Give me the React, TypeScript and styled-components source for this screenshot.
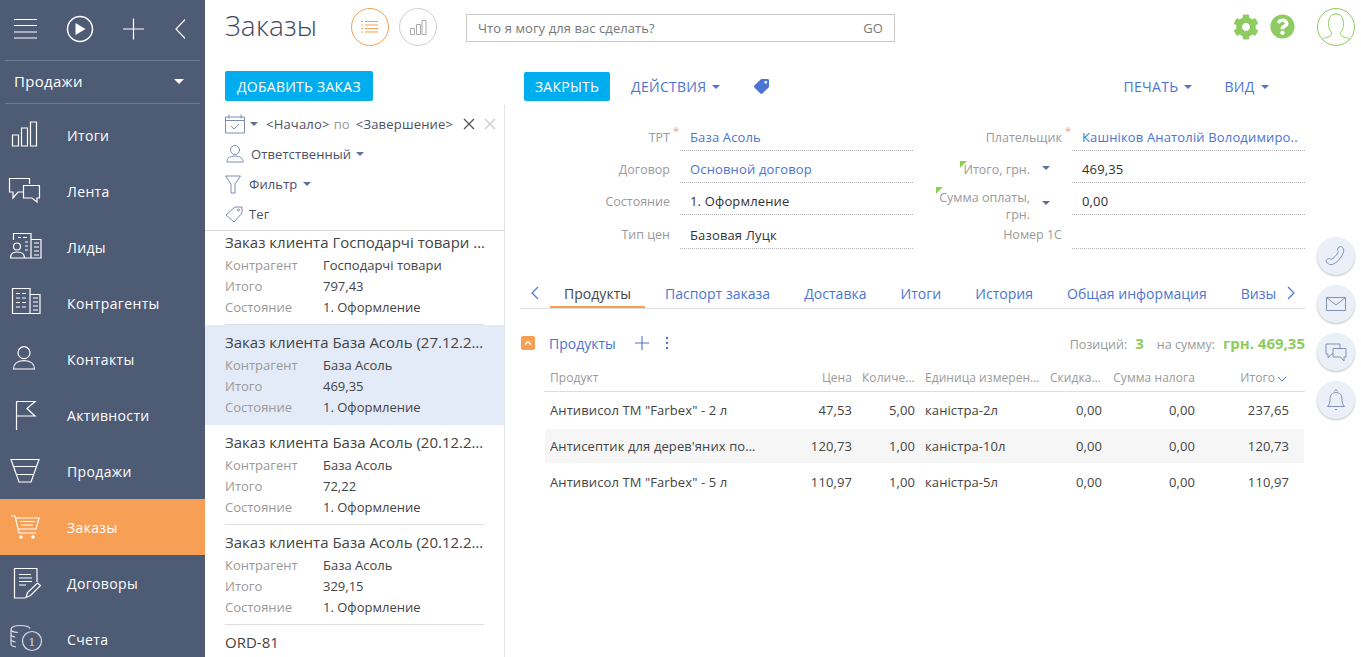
import React from 'react';
import styled, { createGlobalStyle } from 'styled-components';
import { FaCog, FaQuestionCircle, FaTag } from 'react-icons/fa';

const BLUE = '#4d74d2';
const SKY = '#00aeef';
const ORANGE = '#f79f55';
const GREEN = '#8ecb60';
const NAVY = '#4e5b75';
const LABEL = '#9a9a9a';

const GlobalStyle = createGlobalStyle`
  html, body, #root {
    margin: 0;
    height: 100%;
    overflow: hidden;
  }
  body {
    font-family: "Open Sans", "Liberation Sans", sans-serif;
    font-size: 13px;
    color: #444;
    background: #fff;
  }
  * { box-sizing: border-box; }
`;

const Page = styled.div`
  display: flex;
  height: 657px;
  overflow: hidden;
`;

const Sidebar = styled.aside`
  width: 205px;
  flex: none;
  background: ${NAVY};
  color: #fff;
  overflow: hidden;
`;

const SideTop = styled.div`
  height: 61px;
  margin: 0 5px;
  border-bottom: 1px solid #6f7b94;
  padding: 0 0 0 8px;
  display: flex;
  align-items: center;
`;

const SideSvg = styled.svg`
  display: block;
  fill: none;
  stroke: #fff;
  stroke-width: 1.2;
`;

const Section = styled.div`
  height: 43px;
  margin: 0 5px;
  padding: 0 16px 2px 9px;
  border-bottom: 1px solid #6f7b94;
  display: flex;
  align-items: center;
  justify-content: space-between;
  font-size: 15px;
  letter-spacing: 0.3px;
`;

const Caret = styled.span<{ $color?: string; $size?: number }>`
  display: inline-block;
  flex: none;
  width: 0;
  height: 0;
  border-style: solid;
  border-color: ${(p) => p.$color ?? '#5a6f9c'} transparent transparent;
  border-width: ${(p) => p.$size ?? 4}px ${(p) => p.$size ?? 4}px 0;
`;

const Nav = styled.nav`
  padding-top: 3px;
`;

const NavItem = styled.div<{ $active?: boolean }>`
  height: 56px;
  padding-left: 4px;
  display: flex;
  align-items: center;
  font-size: 14px;
  font-weight: 500;
  letter-spacing: 0.35px;
  background: ${(p) => (p.$active ? ORANGE : 'transparent')};
  svg { margin-right: 13px; flex: none; }
`;

const NavIcon = ({ children }: { children: React.ReactNode }) => (
  <SideSvg width="50" height="40" viewBox="0 0 50 40">{children}</SideSvg>
);

const navItems: { label: string; active?: boolean; icon: React.ReactNode }[] = [
  { label: 'Итоги', icon: <path d="M8.5 20h6v11h-6zM17.5 13h6v18h-6zM26.5 7h6v24h-6z" /> },
  { label: 'Лента', icon: <path d="M25.5 13V7.5H5.5V21H9v6l5-6h5M19.5 14.5h16V27H33v4l-5-4h-8.5z" /> },
  {
    label: 'Лиды',
    icon: (
      <>
        <path d="M9.5 13V6.5h17.5v24.5H21M27 12.5h10V31H27M14 10.5h3M19 10.5h4M21 15h3M21 19h3M21 23h3M30 16h5M30 20h5M30 24h5M30 28h5" />
        <circle cx="13" cy="19.5" r="3.5" />
        <path d="M6.5 31c0-4 2-6 6.500-6s7.500 2 7.500 6z" />
      </>
    ),
  },
  {
    label: 'Контрагенты',
    icon: <path d="M8.500 5.500h17.500v25H8.500zM26 11.500h10v19H26M12 10.500h4M18 10.500h4M12 15h4M18 15h4M12 19.500h4M18 19.500h4M12 24h4M18 24h4M29 15h5M29 19h5M29 23h5M29 27h5" />,
  },
  {
    label: 'Контакты',
    icon: (
      <>
        <circle cx="20" cy="13.700" r="6" />
        <path d="M9.500 30c0-6 3.500-8 10.500-8.500 7 .5 10.500 2.500 10.500 8.500z" />
      </>
    ),
  },
  { label: 'Активности', icon: <path d="M12.500 35V6.500H31L23 13.500 31 21H12.500" /> },
  { label: 'Продажи', icon: <path d="M7 8.500h28L27 31H15zM10 15.500h22M13 23.500h16" /> },
  {
    label: 'Заказы',
    active: true,
    icon: (
      <>
        <path d="M7 9h4l4 17h17M12 11h23l-3 11H14.500M16 14.500h15M17 18h12" />
        <circle cx="17" cy="30" r="1.200" fill="#fff" />
        <circle cx="29" cy="30" r="1.200" fill="#fff" />
      </>
    ),
  },
  {
    label: 'Договоры',
    icon: (
      <>
        <path d="M33 19V5.500H10.500V35H21M15 11.500h12M15 15h13M15 18.500h13M15 22h7" />
        <path d="M22 34.500l1.500-5L33.500 20l3 2.500-10 10z" />
      </>
    ),
  },
  {
    label: 'Счета',
    icon: (
      <g stroke="#d8dce4">
        <path d="M7 10c0-2 4-3.500 9-3.500s9 1 10 3M7 10c0 2 3 3.300 7 3.500M7 10v5c0 1.500 1.500 2.500 4 3.200M7 15v5c0 1.500 1.500 2.500 4.500 3.200M7 20v5c0 1.500 2 2.500 5 3" />
        <circle cx="28" cy="22" r="9.500" />
        <text x="28" y="27" fontSize="13" textAnchor="middle" fontFamily="Liberation Serif, serif" fill="#d8dce4" stroke="none">1</text>
      </g>
    ),
  },
];

const Main = styled.main`
  flex: 1;
  min-width: 0;
  display: flex;
  flex-direction: column;
`;

const Header = styled.header`
  height: 53px;
  flex: none;
  padding: 0 6px 0 20px;
  display: flex;
  align-items: center;
`;

const Title = styled.h1`
  margin: -3px 34px 0 0;
  width: 92px;
  font-size: 28px;
  font-weight: 300;
  color: #3f4860;
  letter-spacing: 0.2px;
`;

const RoundIcon = styled.div<{ $color: string }>`
  width: 38px;
  height: 38px;
  margin-right: 10px;
  border: 1px solid ${(p) => p.$color};
  border-radius: 50%;
  display: flex;
  align-items: center;
  justify-content: center;
  flex: none;
`;

const Search = styled.div`
  width: 429px;
  height: 28px;
  margin: 2px 0 0 19px;
  padding: 0 11px;
  border: 1px solid #c9c9c9;
  display: flex;
  align-items: center;
  justify-content: space-between;
  color: #777;
  letter-spacing: 0.08px;
`;

const HeaderRight = styled.div`
  margin-left: auto;
  display: flex;
  align-items: center;
  color: ${GREEN};
`;

const Avatar = styled.div`
  width: 38px;
  height: 38px;
  margin-left: 22px;
  border: 1px solid ${GREEN};
  border-radius: 50%;
  overflow: hidden;
`;

const Columns = styled.div`
  flex: 1;
  min-height: 0;
  display: flex;
`;

const ListColumn = styled.div`
  width: 300px;
  flex: none;
  display: flex;
  flex-direction: column;
`;

const PrimaryButton = styled.button`
  height: 30px;
  border: 0;
  border-radius: 2px;
  background: ${SKY};
  color: #fff;
  font: 14px "Open Sans", sans-serif;
  letter-spacing: 0.25px;
  padding: 0 12px;
`;

const AddRow = styled.div`
  height: 52px;
  padding: 18px 0 0 20px;
  flex: none;
`;

const Filters = styled.div`
  flex: none;
  height: 126px;
  padding: 4px 0 0 20px;
  border-right: 1px solid #e4e4e4;
  border-bottom: 1px solid #d9d9d9;
`;

const FilterRow = styled.div`
  height: 30px;
  display: flex;
  align-items: center;
  color: #4a5068;
  white-space: nowrap;
  letter-spacing: 0.1px;
`;

const FilterIcon = styled.svg<{ $gap: number }>`
  flex: none;
  width: 20px;
  height: 20px;
  margin-right: ${(p) => p.$gap}px;
  fill: none;
  stroke: #7d8db0;
  stroke-width: 1;
`;

const DateText = styled.span<{ $left?: number }>`
  margin-left: ${(p) => p.$left ?? 0}px;
  letter-spacing: 0.2px;
`;

const Muted = styled.span`
  color: #999;
  margin: 0 6px 0 4px;
`;

const ClearIcon = styled.svg<{ $color: string; $left: number }>`
  flex: none;
  width: 12px;
  height: 12px;
  margin-left: ${(p) => p.$left}px;
  stroke: ${(p) => p.$color};
  stroke-width: 1.3;
  fill: none;
`;

const OrderList = styled.div`
  flex: 1;
  min-height: 0;
  overflow: hidden;
  border-right: 1px solid #e4e4e4;
`;

const OrderItem = styled.div<{ $selected?: boolean }>`
  height: 100px;
  padding: 0 20px;
  background: ${(p) => (p.$selected ? '#e3eaf8' : 'transparent')};
  &:first-child { margin-top: -6px; }
`;

const OrderBody = styled.div<{ $plain?: boolean }>`
  height: 100px;
  padding-top: 6px;
  border-bottom: 1px solid ${(p) => (p.$plain ? 'transparent' : '#dedede')};
`;

const OrderTitle = styled.div`
  height: 21px;
  margin: 0 -2px 3px 0;
  line-height: 22px;
  font-size: 15px;
  color: #444;
  white-space: nowrap;
  overflow: hidden;
  text-overflow: ellipsis;
`;

const MetaRow = styled.div`
  height: 21px;
  line-height: 21px;
  display: grid;
  grid-template-columns: 98px 1fr;
  font-size: 13px;
`;

const MetaLabel = styled.span`
  color: ${LABEL};
`;

const Detail = styled.section`
  width: 800px;
  flex: none;
`;

const Toolbar = styled.div`
  height: 66px;
  padding: 19px 0 0 19px;
  display: flex;
  align-items: flex-start;
`;

const ToolLink = styled.div<{ $left: number }>`
  height: 29px;
  margin-left: ${(p) => p.$left}px;
  display: flex;
  align-items: center;
  gap: 6px;
  color: ${BLUE};
  font-size: 14px;
  letter-spacing: 0.3px;
`;

const CloseButton = styled(PrimaryButton)`
  height: 29px;
  width: 86px;
  padding: 0;
`;

const Form = styled.div`
  display: grid;
  grid-template-columns: 408px 372px;
  column-gap: 20px;
`;

const FormColumn = styled.div`
  display: flex;
  flex-direction: column;
`;

const Field = styled.div<{ $tall?: boolean }>`
  height: ${(p) => (p.$tall ? 34 : 32)}px;
  display: grid;
  grid-template-columns: 1fr 233px;
  grid-template-rows: minmax(0, 1fr);
  column-gap: 10px;
`;

const FieldLabel = styled.div<{ $pad?: number; $tall?: boolean }>`
  padding: ${(p) => (p.$tall ? 10 : 9)}px ${(p) => p.$pad ?? 0}px 0 0;
  line-height: 20px;
  font-size: 12.5px;
  text-align: right;
  color: ${LABEL};
  position: relative;
`;

const Star = styled.span`
  position: absolute;
  right: -9px;
  top: 2px;
  color: #ee9a70;
  font-size: 11px;
`;

const LabelCaret = styled.span<{ $top: number }>`
  position: absolute;
  right: 12px;
  top: ${(p) => p.$top}px;
  display: flex;
`;

const Corner = styled.span<{ $left: number; $top: number }>`
  position: absolute;
  left: ${(p) => p.$left}px;
  top: ${(p) => p.$top}px;
  width: 0;
  height: 0;
  border-style: solid;
  border-width: 7px 7px 0 0;
  border-color: #8fd14f transparent transparent;
`;

const TwoLine = styled.div`
  line-height: 17px;
  margin-top: -3px;
`;

const FieldValue = styled.div<{ $link?: boolean; $tall?: boolean }>`
  padding: ${(p) => (p.$tall ? 10 : 8)}px 0 0 10px;
  line-height: 20px;
  border-bottom: 1px dotted #b5b5b5;
  color: ${(p) => (p.$link ? BLUE : '#333')};
  letter-spacing: 0.15px;
  white-space: nowrap;
  overflow: hidden;
`;

const TabBar = styled.div`
  margin: 29px 0 0 15px;
  height: 31px;
  border-bottom: 1px solid #ddd;
  display: flex;
`;

const TabArrow = styled.div<{ $width: number }>`
  width: ${(p) => p.$width}px;
  flex: none;
  display: flex;
  align-items: center;
  justify-content: center;
  height: 30px;
`;

const TabStrip = styled.div`
  flex: 1;
  min-width: 0;
  display: flex;
  gap: 6px;
  overflow: hidden;
`;

const Tab = styled.div<{ $active?: boolean }>`
  height: 31px;
  padding: 0 14px;
  line-height: 31px;
  flex: none;
  font-size: 14px;
  letter-spacing: 0.03px;
  white-space: nowrap;
  color: ${(p) => (p.$active ? '#444' : BLUE)};
  border-bottom: 3px solid ${(p) => (p.$active ? ORANGE : 'transparent')};
`;

const ProductsHead = styled.div`
  height: 22px;
  margin: 23px 0 0 16px;
  display: flex;
  align-items: center;
`;

const Toggle = styled.div`
  width: 14px;
  height: 14px;
  margin-right: 14px;
  background: ${ORANGE};
  border-radius: 2px;
  display: flex;
  align-items: center;
  justify-content: center;
`;

const ProductsTitle = styled.span`
  color: ${BLUE};
  font-size: 14px;
  width: 86px;
`;

const Summary = styled.div`
  margin-left: auto;
  display: flex;
  align-items: baseline;
  color: ${LABEL};
  font-size: 12.5px;
  white-space: nowrap;
`;

const SummaryValue = styled.b<{ $size: number; $left: number; $right: number }>`
  color: ${GREEN};
  font-size: ${(p) => p.$size}px;
  margin: 0 ${(p) => p.$right}px 0 ${(p) => p.$left}px;
`;

const Table = styled.div`
  margin-left: 39px;
`;

const GRID = '210px 92px 63px 125px 62px 93px 94px';

const HeadRow = styled.div`
  height: 28px;
  margin-top: 10px;
  padding: 0 15px 0 6px;
  border-bottom: 1px solid #ddd;
  display: grid;
  grid-template-columns: ${GRID};
  align-items: center;
  color: ${LABEL};
  font-size: 12px;
  letter-spacing: 0.05px;
`;

const Row = styled.div<{ $striped?: boolean }>`
  height: 34px;
  margin: 2px 1px 0;
  ${HeadRow} + & { margin-top: 1px; }
  padding: 0 14px 0 5px;
  display: grid;
  grid-template-columns: ${GRID};
  align-items: center;
  letter-spacing: 0.1px;
  background: ${(p) => (p.$striped ? '#f6f6f6' : 'transparent')};
`;

const Cell = styled.div<{ $right?: boolean }>`
  min-width: 0;
  padding-left: 10px;
  white-space: nowrap;
  overflow: hidden;
  text-overflow: ellipsis;
  text-align: ${(p) => (p.$right ? 'right' : 'left')};
  &:first-child { padding: 0 2px 0 0; }
`;

const Widgets = styled.div`
  flex: none;
  padding: 184px 0 0 12px;
  display: flex;
  flex-direction: column;
  gap: 10px;
`;

const Widget = styled.div`
  width: 38px;
  height: 38px;
  border-radius: 50%;
  background: #ebeff7;
  box-shadow: 0 1px 2px rgba(0, 0, 0, 0.25);
  display: flex;
  align-items: center;
  justify-content: center;
  svg { fill: none; stroke: #7f93b5; stroke-width: 1; }
`;

const SortMark = styled.svg`
  margin: 0 2px 0 2px;
`;

const orders = [
  { title: 'Заказ клиента Господарчі товари (27.12.2017)', client: 'Господарчі товари', total: '797,43' },
  { title: 'Заказ клиента База Асоль (27.12.2017)', client: 'База Асоль', total: '469,35', selected: true },
  { title: 'Заказ клиента База Асоль (20.12.2017)', client: 'База Асоль', total: '72,22' },
  { title: 'Заказ клиента База Асоль (20.12.2017)', client: 'База Асоль', total: '329,15' },
];

const tabs = ['Продукты', 'Паспорт заказа', 'Доставка', 'Итоги', 'История', 'Общая информация', 'Визы'];

const products = [
  { name: 'Антивисол ТМ "Farbex" - 2 л', price: '47,53', qty: '5,00', unit: 'каністра-2л', total: '237,65' },
  { name: "Антисептик для дерев'яних поверхонь", price: '120,73', qty: '1,00', unit: 'каністра-10л', total: '120,73', striped: true },
  { name: 'Антивисол ТМ "Farbex" - 5 л', price: '110,97', qty: '1,00', unit: 'каністра-5л', total: '110,97' },
];

const Chevron = ({ left }: { left?: boolean }) => (
  <svg width="10" height="14" viewBox="0 0 10 14" fill="none" stroke={BLUE} strokeWidth="1.200">
    <path d={left ? 'M8 1L2 7l6 6' : 'M2 1l6 6-6 6'} />
  </svg>
);

export default function App() {
  return (
    <Page>
      <GlobalStyle />
      <Sidebar>
        <SideTop>
          <SideSvg width="172" height="30" viewBox="0 0 172 30">
            <path d="M1 4.500h23M1 10.500h23M1 17h23M1 23h23" />
            <circle cx="67" cy="14" r="12.500" strokeWidth="1.500" />
            <path d="M62.500 8l10 6-10 6z" fill="#fff" stroke="none" />
            <path d="M110 14h21M120.500 3.500v21" />
            <path d="M173 3.500L163 14l10 10.500" />
          </SideSvg>
        </SideTop>
        <Section>
          Продажи
          <Caret $color="#fff" $size={5} />
        </Section>
        <Nav>
          {navItems.map((item) => (
            <NavItem key={item.label} $active={item.active}>
              <NavIcon>{item.icon}</NavIcon>
              {item.label}
            </NavItem>
          ))}
        </Nav>
      </Sidebar>
      <Main>
        <Header>
          <Title>Заказы</Title>
          <RoundIcon $color={ORANGE}>
            <svg width="18" height="14" viewBox="0 0 18 14" stroke={ORANGE} fill="none">
              <path d="M0 1.500h2M4 1.500h13M0 5h2M4 5h13M0 8.500h2M4 8.500h13M0 12h2M4 12h13" />
            </svg>
          </RoundIcon>
          <RoundIcon $color="#cfcfcf">
            <svg width="18" height="18" viewBox="0 0 18 18" stroke="#aaa" fill="none">
              <path d="M1.500 10.500h4v6h-4zM7.500 6.500h4v10h-4zM13 2.500h4v14h-4z" />
            </svg>
          </RoundIcon>
          <Search>
            <span>Что я могу для вас сделать?</span>
            <span>GO</span>
          </Search>
          <HeaderRight>
            <FaCog size={26} />
            <FaQuestionCircle size={25} style={{ marginLeft: 11 }} />
            <Avatar>
              <svg width="36" height="36" viewBox="0 0 36 36" fill="none" stroke={GREEN}>
                <path d="M1 36c1-6 6-7 10-8.500 2-1 3-2 2.500-4-2-2.500-3-5-3-9C10.500 8 13.500 5 18 5s7.500 3 7.500 9.500c0 4-1 6.500-3 9-.5 2 .5 3 2.500 4 4 1.500 9 2.500 10 8.500" />
              </svg>
            </Avatar>
          </HeaderRight>
        </Header>
        <Columns>
          <ListColumn>
            <AddRow>
              <PrimaryButton>ДОБАВИТЬ ЗАКАЗ</PrimaryButton>
            </AddRow>
            <Filters>
              <FilterRow>
                <FilterIcon $gap={5} viewBox="0 0 20 20">
                  <path d="M.5 3h19v16H.5zM.5 6.500h19M4 .5v4M16 .5v4M6 12l3 3 5-5" />
                </FilterIcon>
                <Caret $color="#5f7196" />
                <DateText $left={8}>&lt;Начало&gt;</DateText>
                <Muted>по</Muted>
                <DateText>&lt;Завершение&gt;</DateText>
                <ClearIcon $color="#555" $left={10} viewBox="0 0 12 12"><path d="M1 1l10 10M11 1L1 11" /></ClearIcon>
                <ClearIcon $color="#ccc" $left={9} viewBox="0 0 12 12"><path d="M1 1l10 10M11 1L1 11" /></ClearIcon>
              </FilterRow>
              <FilterRow>
                <FilterIcon $gap={6} viewBox="0 0 20 20">
                  <circle cx="10" cy="6" r="4.500" />
                  <path d="M2 18c0-4.500 3-5.500 8-6 5 .5 8 1.500 8 6z" />
                </FilterIcon>
                Ответственный
                <Caret $color="#5f7196" style={{ marginLeft: 5 }} />
              </FilterRow>
              <FilterRow>
                <FilterIcon $gap={4} viewBox="0 0 20 20">
                  <path d="M.5 2h15l-5.500 8v9h-4v-9z" />
                </FilterIcon>
                Фильтр
                <Caret $color="#5f7196" style={{ marginLeft: 6 }} />
              </FilterRow>
              <FilterRow>
                <FilterIcon $gap={4} viewBox="0 0 20 20">
                  <path d="M1 11L10 3h7v6l-8 9zM13.500 5a1 1 0 100 2 1 1 0 000-2z" />
                </FilterIcon>
                Тег
              </FilterRow>
            </Filters>
            <OrderList>
              {orders.map((order, i) => (
                <OrderItem key={i} $selected={order.selected}>
                  <OrderBody $plain={order.selected}>
                    <OrderTitle>{order.title}</OrderTitle>
                    <MetaRow><MetaLabel>Контрагент</MetaLabel><span>{order.client}</span></MetaRow>
                    <MetaRow><MetaLabel>Итого</MetaLabel><span>{order.total}</span></MetaRow>
                    <MetaRow><MetaLabel>Состояние</MetaLabel><span>1. Оформление</span></MetaRow>
                  </OrderBody>
                </OrderItem>
              ))}
              <OrderItem>
                <OrderBody $plain>
                  <OrderTitle>ORD-81</OrderTitle>
                </OrderBody>
              </OrderItem>
            </OrderList>
          </ListColumn>
          <Detail>
            <Toolbar>
              <CloseButton>ЗАКРЫТЬ</CloseButton>
              <ToolLink $left={21}>ДЕЙСТВИЯ <Caret $color="#4d74d2" /></ToolLink>
              <ToolLink $left={34}><FaTag size={15} color="#4d74d2" style={{ transform: 'scaleX(-1)' }} /></ToolLink>
              <ToolLink $left={354}>ПЕЧАТЬ <Caret $color="#4d74d2" /></ToolLink>
              <ToolLink $left={32}>ВИД <Caret $color="#4d74d2" /></ToolLink>
            </Toolbar>
            <Form>
              <FormColumn>
                <Field>
                  <FieldLabel>ТРТ<Star>*</Star></FieldLabel>
                  <FieldValue $link>База Асоль</FieldValue>
                </Field>
                <Field>
                  <FieldLabel>Договор</FieldLabel>
                  <FieldValue $link>Основной договор</FieldValue>
                </Field>
                <Field>
                  <FieldLabel>Состояние</FieldLabel>
                  <FieldValue>1. Оформление</FieldValue>
                </Field>
                <Field $tall>
                  <FieldLabel $tall>Тип цен</FieldLabel>
                  <FieldValue $tall>Базовая Луцк</FieldValue>
                </Field>
              </FormColumn>
              <FormColumn>
                <Field>
                  <FieldLabel>Плательщик<Star>*</Star></FieldLabel>
                  <FieldValue $link>Кашніков Анатолій Володимиро..</FieldValue>
                </Field>
                <Field>
                  <FieldLabel $pad={32}>
                    <Corner $left={27} $top={10} />
                    Итого, грн.
                    <LabelCaret $top={15}><Caret $color="#5f7196" /></LabelCaret>
                  </FieldLabel>
                  <FieldValue>469,35</FieldValue>
                </Field>
                <Field>
                  <FieldLabel $pad={32}>
                    <Corner $left={3} $top={4} />
                    <TwoLine>Сумма оплаты,<br />грн.</TwoLine>
                    <LabelCaret $top={18}><Caret $color="#5f7196" /></LabelCaret>
                  </FieldLabel>
                  <FieldValue>0,00</FieldValue>
                </Field>
                <Field $tall>
                  <FieldLabel $tall>Номер 1С</FieldLabel>
                  <FieldValue $tall />
                </Field>
              </FormColumn>
            </Form>
            <TabBar>
              <TabArrow $width={30}><Chevron left /></TabArrow>
              <TabStrip>
                {tabs.map((tab, i) => (
                  <Tab key={tab} $active={i === 0}>{tab}</Tab>
                ))}
              </TabStrip>
              <TabArrow $width={28}><Chevron /></TabArrow>
            </TabBar>
            <ProductsHead>
              <Toggle>
                <svg width="8" height="6" viewBox="0 0 8 6" fill="none" stroke="#fff" strokeWidth="1.300">
                  <path d="M1 4.500L4 1.500l3 3" />
                </svg>
              </Toggle>
              <ProductsTitle>Продукты</ProductsTitle>
              <svg width="14" height="14" viewBox="0 0 14 14" stroke={BLUE} fill="none" strokeWidth="1.100">
                <path d="M0 7h14M7 0v14" />
              </svg>
              <svg width="4" height="14" viewBox="0 0 4 14" fill={BLUE} style={{ marginLeft: 16 }}>
                <circle cx="2" cy="2" r="1.200" />
                <circle cx="2" cy="7" r="1.200" />
                <circle cx="2" cy="12" r="1.200" />
              </svg>
              <Summary>
                Позиций:
                <SummaryValue $size={15} $left={8} $right={13}>3</SummaryValue>
                на сумму:
                <SummaryValue $size={15} $left={8} $right={0}>грн. 469,35</SummaryValue>
              </Summary>
            </ProductsHead>
            <Table>
              <HeadRow>
                <Cell>Продукт</Cell>
                <Cell $right>Цена</Cell>
                <Cell $right>Количество</Cell>
                <Cell>Единица измерения</Cell>
                <Cell $right>Скидка, %</Cell>
                <Cell $right>Сумма налога</Cell>
                <Cell $right>
                  Итого
                  <SortMark width="10" height="6" viewBox="0 0 10 6" fill="none" stroke={BLUE}>
                    <path d="M1 1l4 4 4-4" />
                  </SortMark>
                </Cell>
              </HeadRow>
              {products.map((p) => (
                <Row key={p.name} $striped={p.striped}>
                  <Cell>{p.name}</Cell>
                  <Cell $right>{p.price}</Cell>
                  <Cell $right>{p.qty}</Cell>
                  <Cell>{p.unit}</Cell>
                  <Cell $right>0,00</Cell>
                  <Cell $right>0,00</Cell>
                  <Cell $right>{p.total}</Cell>
                </Row>
              ))}
            </Table>
          </Detail>
          <Widgets>
            <Widget>
              <svg width="24" height="24" viewBox="0 0 24 24">
                <path d="M3 19c-1.500-1.500-1-3 .5-4 1.500-1 2.500-.5 3.500.5 2.500-1 6-4.500 7.500-8-1-1-1.500-2.500-.5-3.500 1.500-1.500 3-2 4.500-.5 1.500 1.500 1.500 3.500.5 6-2 5-6 9-10.500 11-2 .5-4 0-5-1.500z" />
              </svg>
            </Widget>
            <Widget>
              <svg width="20" height="14" viewBox="0 0 20 14">
                <path d="M.5.500h19v13H.5zM.5.500L10 8l9.500-7.500" />
              </svg>
            </Widget>
            <Widget>
              <svg width="22" height="20" viewBox="0 0 22 20">
                <path d="M15 6V2H1v10h2v4l3.500-4H8M8 6.500h13V15h-2v4l-3.500-4H8z" />
              </svg>
            </Widget>
            <Widget>
              <svg width="20" height="24" viewBox="0 0 20 24">
                <path d="M1.500 18.500h17c-2-2-2.500-4-2.500-8 0-3.500-2.500-6-6-6s-6 2.500-6 6c0 4-.5 6-2.500 8zM8.500 3.500c0-2 3-2 3 0M9 21.500h2" />
              </svg>
            </Widget>
          </Widgets>
        </Columns>
      </Main>
    </Page>
  );
}
